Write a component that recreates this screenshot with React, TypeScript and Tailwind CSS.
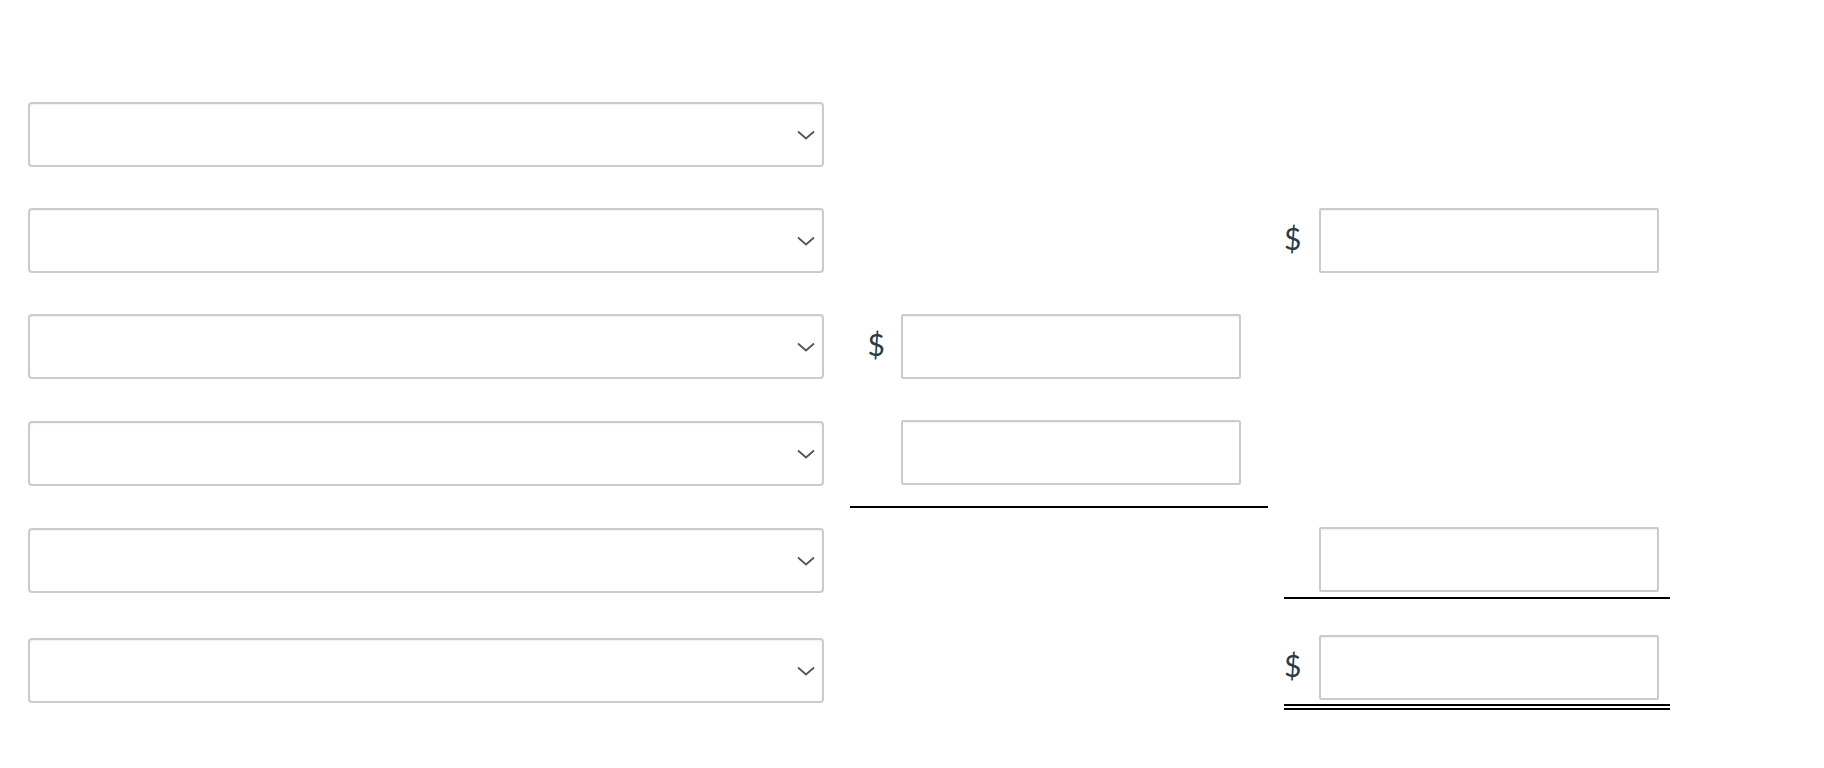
import { ReactNode } from "react";

function Select({ className = "" }: { className?: string }) {
  return (
    <div
      className={
        "flex h-[65px] w-[796px] shrink-0 items-center justify-end rounded-[4px] border-2 border-[#cbcbcb] bg-white pr-[7px] shadow-[inset_0_1px_2px_rgba(0,0,0,0.06)] " +
        className
      }
    >
      <svg width="18" height="10" viewBox="0 0 18 10" fill="none">
        <path d="M1 1.5 L9 8.5 L17 1.5" stroke="#555" strokeWidth="1.8" />
      </svg>
    </div>
  );
}

function Box() {
  return (
    <input
      type="text"
      className="h-[65px] w-[340px] rounded-[2px] border-2 border-[#cbcbcb] bg-white shadow-[inset_0_1px_2px_rgba(0,0,0,0.06)] outline-none"
    />
  );
}

function Dollar() {
  return (
    <span className="-mt-[6px] font-['Lato','Liberation_Sans',sans-serif] text-[30px] leading-none text-[#2d3b45]">
      $
    </span>
  );
}

// middle column: 850..1268
function Mid({ dollar, children }: { dollar?: boolean; children?: ReactNode }) {
  return (
    <div className="ml-[26px] flex w-[418px] shrink-0 items-center">
      <div className="flex w-[51px] justify-end pr-[16px]">{dollar && <Dollar />}</div>
      {children}
    </div>
  );
}

// right column: 1284..1670
function Right({ dollar, children }: { dollar?: boolean; children?: ReactNode }) {
  return (
    <div className="ml-[16px] flex w-[386px] shrink-0 items-center">
      <div className="flex w-[35px] justify-start">{dollar && <Dollar />}</div>
      {children}
    </div>
  );
}

export default function App() {
  return (
    <div className="min-h-[768px] w-[1824px] bg-white pl-[28px] pt-[102px]">
      {/* row 1 */}
      <div className="flex items-start">
        <Select />
      </div>

      {/* row 2 */}
      <div className="mt-[41px] flex items-start">
        <Select />
        <Mid />
        <Right dollar>
          <Box />
        </Right>
      </div>

      {/* row 3 */}
      <div className="mt-[41px] flex items-start">
        <Select />
        <Mid dollar>
          <Box />
        </Mid>
      </div>

      {/* row 4 */}
      <div className="mt-[41px] flex items-start">
        <Select className="mt-[1px]" />
        <div className="ml-[26px] flex w-[418px] shrink-0 border-b-2 border-black pb-[21px] pl-[51px]">
          <Box />
        </div>
      </div>

      {/* row 5 */}
      <div className="mt-[19px] flex items-start">
        <Select className="mt-[1px]" />
        <Mid />
        <div className="ml-[16px] flex w-[386px] shrink-0 border-b-2 border-black pb-[5px] pl-[35px]">
          <Box />
        </div>
      </div>

      {/* row 6 */}
      <div className="mt-[36px] flex items-start">
        <Select className="mt-[3px]" />
        <Mid />
        <div className="ml-[16px] flex w-[386px] shrink-0 items-center border-b-[6px] border-double border-black pb-[4px]">
          <div className="flex w-[35px] justify-start">
            <Dollar />
          </div>
          <Box />
        </div>
      </div>
    </div>
  );
}
